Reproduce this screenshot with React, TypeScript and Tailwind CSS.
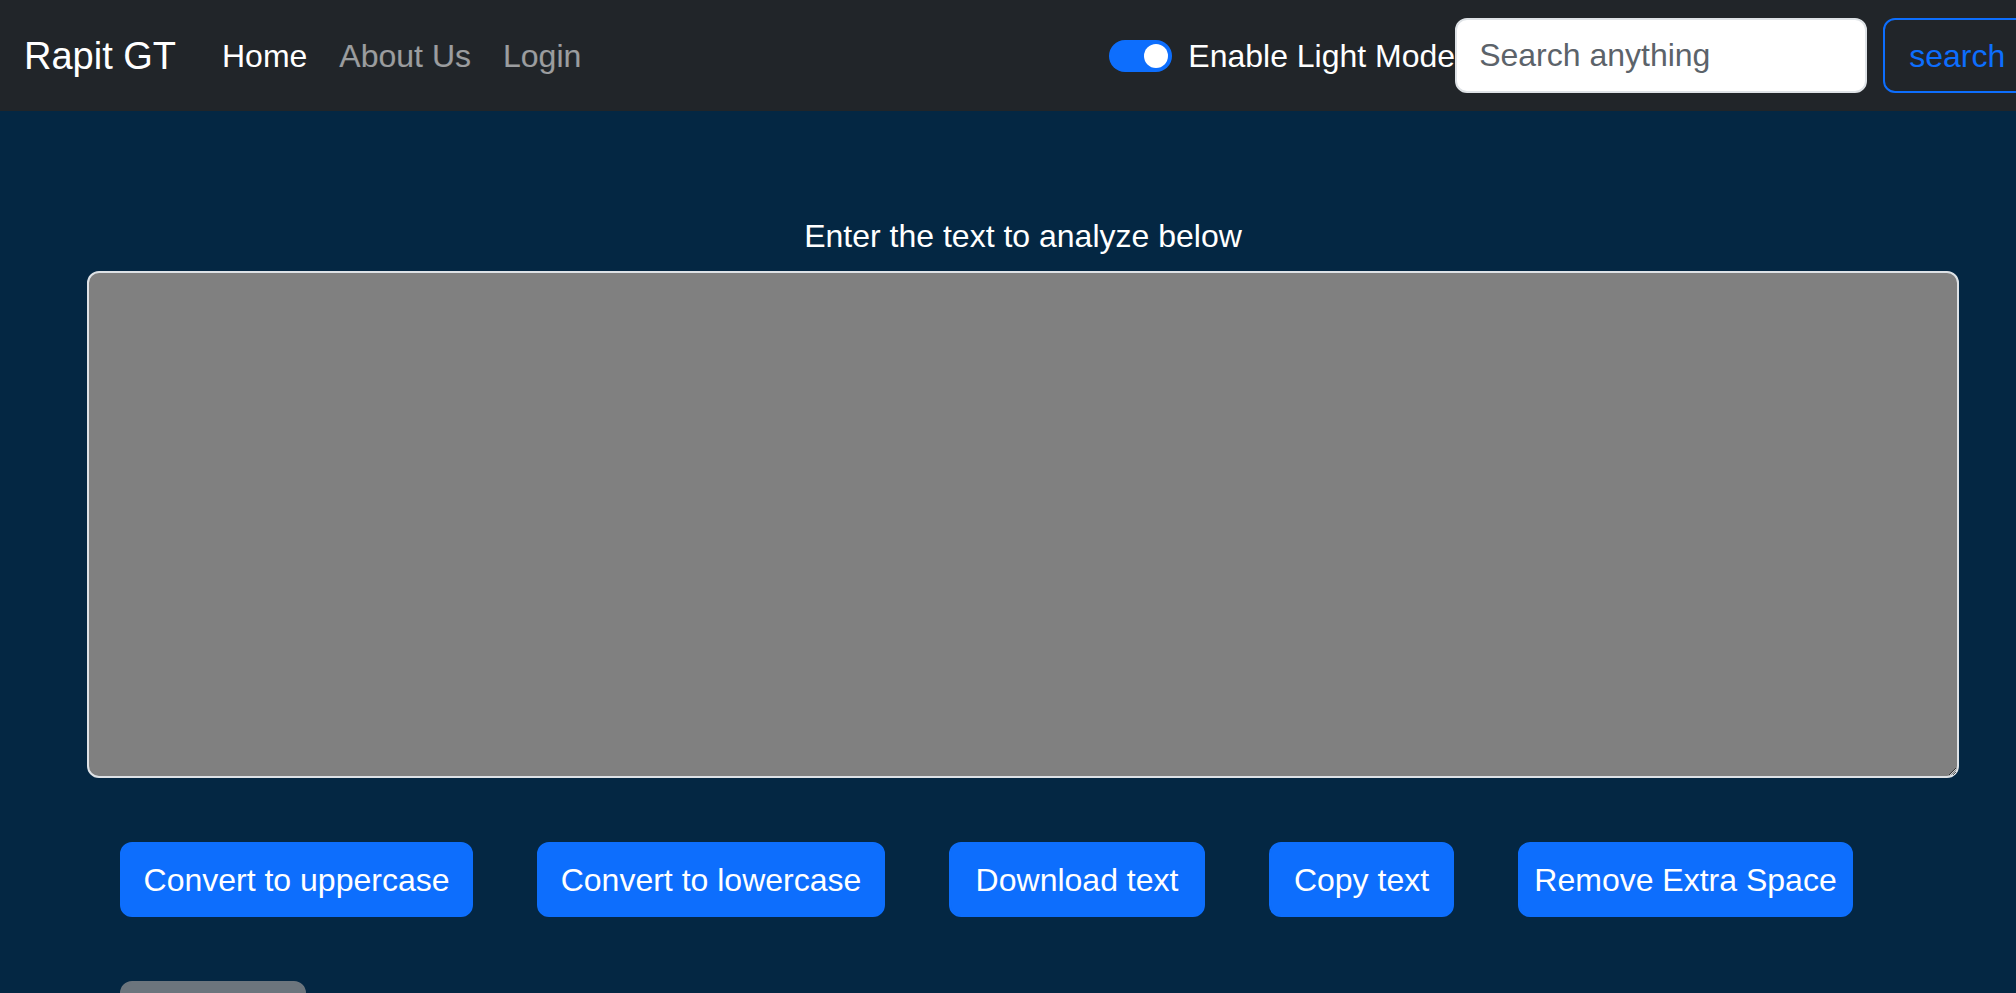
import React, { useState } from 'react';

const buttons = [
  { label: 'Convert to uppercase', w: 'w-[353px]' },
  { label: 'Convert to lowercase', w: 'w-[348px]' },
  { label: 'Download text', w: 'w-[256px]' },
  { label: 'Copy text', w: 'w-[185px]' },
  { label: 'Remove Extra Space', w: 'w-[335px]' },
];

export default function App() {
  const [text, setText] = useState('');
  const [light, setLight] = useState(true);

  return (
    <div className="min-h-screen w-full overflow-hidden bg-[#042743] font-['Liberation_Sans',Arial,sans-serif]">
      <nav className="flex h-[111px] items-center bg-[#212529] whitespace-nowrap">
        <a className="ml-[24px] w-[148px] text-[38px] leading-[60px] text-white">Rapit GT</a>
        <div className="ml-[34px] flex items-center">
          <a className="px-[16px] text-[32px] leading-[48px] text-white">Home</a>
          <a className="px-[16px] text-[32px] leading-[48px] text-white/55">About Us</a>
          <a className="px-[16px] text-[32px] leading-[48px] text-white/55">Login</a>
        </div>
        <div className="ml-[512px] flex shrink-0 items-center">
          <button
            onClick={() => setLight(!light)}
            className={`flex h-[32px] w-[63px] items-center rounded-full px-[4px] ${
              light ? 'justify-end bg-[#0d6efd]' : 'justify-start border-2 border-[#dee2e6] bg-white'
            }`}
          >
            <span className={`h-[24px] w-[24px] rounded-full ${light ? 'bg-white' : 'bg-[#adb5bd]'}`} />
          </button>
          <span className="ml-[16px] text-[32px] leading-[48px] text-white">Enable Light Mode</span>
          <input
            type="search"
            placeholder="Search anything"
            className="h-[75px] w-[412px] rounded-[12px] border-2 border-[#dee2e6] bg-white px-[22px] text-[32px] text-[#212529] placeholder:text-[#5c636a] focus:outline-none"
          />
          <button className="ml-[16px] h-[75px] shrink-0 rounded-[12px] border-2 border-[#0d6efd] px-[24px] text-[32px] text-[#0d6efd]">
            search
          </button>
        </div>
      </nav>

      <main className="ml-[87px] mr-[57px] pt-[101px]">
        <h5 className="text-center text-[32px] leading-[48px] text-white">Enter the text to analyze below</h5>
        <textarea
          value={text}
          onChange={(e) => setText(e.target.value)}
          className="mt-[11px] block h-[507px] w-full rounded-[12px] border-2 border-[#dee2e6] bg-[#808080] px-[24px] py-[12px] text-[32px] text-white focus:outline-none"
        />
        <div className="mt-[64px] flex flex-wrap gap-x-[64px] gap-y-[64px] pl-[33px]">
          {buttons.map((b) => (
            <button
              key={b.label}
              className={`${b.w} h-[75px] shrink-0 whitespace-nowrap rounded-[12px] border-2 border-[#0d6efd] bg-[#0d6efd] text-[32px] leading-[48px] text-white`}
            >
              {b.label}
            </button>
          ))}
          <button className="h-[75px] w-[186px] shrink-0 rounded-[12px] border-2 border-[#6c757d] bg-[#6c757d] text-[32px] leading-[48px] text-white">
            Clear text
          </button>
        </div>
      </main>
    </div>
  );
}
